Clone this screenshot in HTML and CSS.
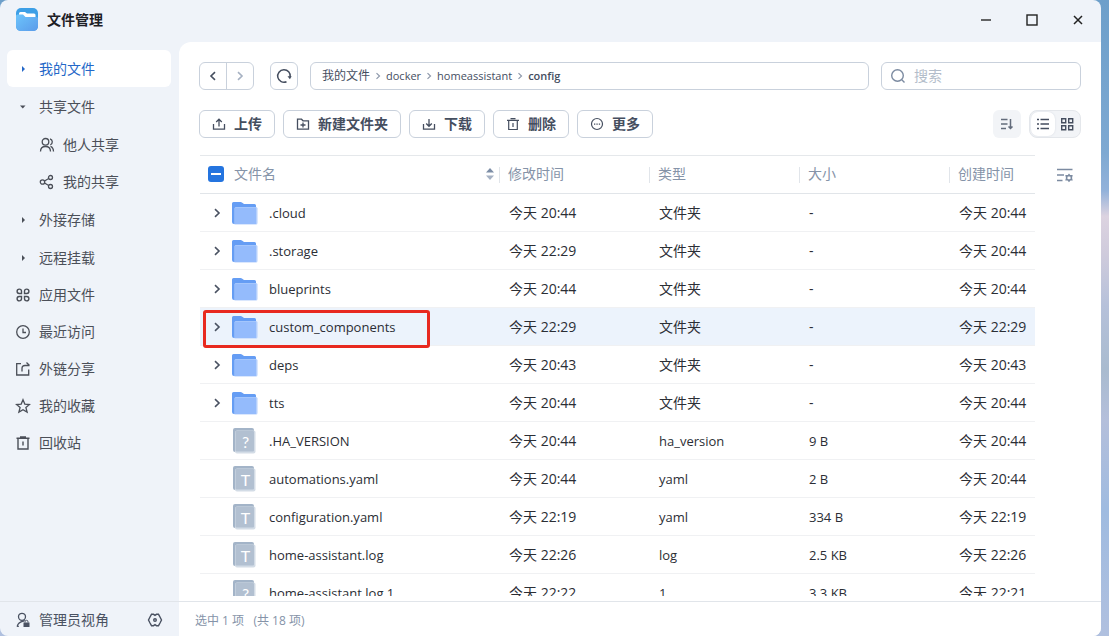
FILE: index.html
```html
<!DOCTYPE html>
<html lang="zh-CN">
<head>
<meta charset="utf-8">
<title>文件管理</title>
<link rel="stylesheet" href="styles.css">
</head>
<body>
<svg class="sprite" aria-hidden="true">
  <defs>
    <linearGradient id="g-logo" x1="0" y1="0" x2="1" y2="1"><stop offset="0" stop-color="#6cc4fb"/><stop offset="1" stop-color="#5b9bea"/></linearGradient>
  </defs>
  <symbol id="folder" viewBox="0 0 26 24">
    <path d="M0 2.500Q0 1 1.500 1H8.500q1 0 1.800.8L12 3H22.500q1.500 0 1.500 1.500V23H2q-2 0-2-2z" fill="#659df4"/>
    <path d="M2.500 7.500Q2.500 6 4 6H24q1.500 0 1.500 1.500V22q0 1.500-1.500 1.500H2.500z" fill="#b5d0fc"/>
    <path d="M3 7.500Q3 6.500 4 6.500H24V23H3z" fill="#94bbfc"/>
  </symbol>
  <symbol id="file" viewBox="0 0 24 26">
    <rect x="0" y="0" width="21" height="24" rx="2" fill="#a3b4c8"/>
    <rect x="2" y="2.500" width="20.500" height="23" rx="2" fill="#d3dce6"/>
    <rect x="2.500" y="3" width="18.500" height="20.500" rx="1" fill="#b2c0d1"/>
  </symbol>
  <symbol id="right" viewBox="0 0 16 16"><path d="M6 4.200l4 3.800-4 3.800" fill="none" stroke="currentColor" stroke-width="1.600"/></symbol>
  <symbol id="left" viewBox="0 0 16 16"><path d="M10 4.200L6 8l4 3.800" fill="none" stroke="currentColor" stroke-width="1.600"/></symbol>
</svg>
<div class="window">
  <header class="titlebar">
    <svg class="logo" viewBox="0 0 22 23"><rect width="22" height="23" rx="5" fill="#3d9fe6"/><path d="M3 5.500Q3 4 4.500 4H9l2 1.500h7q1.500 0 1.500 1.500v4H3z" fill="#fff"/><path d="M0 8q0-1.500 1.500-1.500H7L9.500 9H20.500Q22 9 22 10.500V18q0 5-5 5H5q-5 0-5-5z" fill="url(#g-logo)"/></svg>
    <h1 class="title">文件管理</h1>
    <button class="winbtn" aria-label="最小化"><svg width="12" height="12"><path d="M1 6h10" stroke="#333" stroke-width="1.500"/></svg></button>
    <button class="winbtn" aria-label="最大化"><svg width="12" height="12"><rect x="1" y="1" width="10" height="10" fill="none" stroke="#222" stroke-width="1.400"/></svg></button>
    <button class="winbtn" aria-label="关闭"><svg width="12" height="12"><path d="M2 2l8 8M10 2l-8 8" stroke="#222" stroke-width="1.500"/></svg></button>
  </header>
  <div class="body">
    <aside class="sidebar">
      <nav class="nav">
        <ul class="tree">
          <li><a class="item active" href="#"><svg class="ic" viewBox="0 0 16 16"><path d="M7 5L10 8 7 11z" fill="currentColor"/></svg>我的文件</a></li>
          <li><a class="item" href="#"><svg class="ic" viewBox="0 0 16 16"><path d="M5 6.500h5.500L7.800 9.500z" fill="currentColor"/></svg>共享文件</a></li>
          <li>
            <ul>
              <li><a class="item sub" href="#"><svg class="ic" viewBox="0 0 16 16"><g fill="none" stroke="currentColor" stroke-width="1.300"><circle cx="6.500" cy="4.800" r="3.300"/><path d="M1.500 14.500c0-3.200 2-5 5-5s5 1.800 5 5M11 1.800c3 1 3 5 .3 6.200M11.500 9.300c2 .8 3 2.500 3 5.200"/></g></svg>他人共享</a></li>
              <li><a class="item sub" href="#"><svg class="ic" viewBox="0 0 16 16"><g fill="none" stroke="currentColor" stroke-width="1.300"><circle cx="3.500" cy="8" r="2.200"/><circle cx="11.500" cy="3.500" r="2"/><circle cx="11.500" cy="12.500" r="2"/><path d="M5.500 7l4.200-2.500M5.500 9l4.200 2.500"/></g></svg>我的共享</a></li>
            </ul>
          </li>
          <li><a class="item" href="#"><svg class="ic" viewBox="0 0 16 16"><path d="M7 5L10 8 7 11z" fill="currentColor"/></svg>外接存储</a></li>
          <li><a class="item" href="#"><svg class="ic" viewBox="0 0 16 16"><path d="M7 5L10 8 7 11z" fill="currentColor"/></svg>远程挂载</a></li>
        </ul>
        <ul>
          <li><a class="item" href="#"><svg class="ic" viewBox="0 0 16 16"><g fill="none" stroke="currentColor" stroke-width="1.400"><path d="M6.500 6.500H4.200a2.200 2.200 0 1 1 2.300-2.300zM9.500 6.500V4.200a2.200 2.200 0 1 1 2.300 2.300zM6.500 9.500v2.300a2.200 2.200 0 1 1-2.300-2.300zM9.500 9.500h2.300a2.200 2.200 0 1 1-2.300 2.300z"/></g></svg>应用文件</a></li>
          <li><a class="item" href="#"><svg class="ic" viewBox="0 0 16 16"><g fill="none" stroke="currentColor" stroke-width="1.300"><circle cx="8" cy="8" r="6.300"/><path d="M8 4.500V8.500h3"/></g></svg>最近访问</a></li>
          <li><a class="item" href="#"><svg class="ic" viewBox="0 0 16 16"><g fill="none" stroke="currentColor" stroke-width="1.300"><path d="M6 2.700H1.700V14h12V8.500M7 10.500V7.500q0-3 3-3h4.500M11.500 1.500l3 3"/></g></svg>外链分享</a></li>
          <li><a class="item" href="#"><svg class="ic" viewBox="0 0 16 16"><path d="M8 1.800l1.800 4.300 4.700.4-3.600 3 1.200 4.600L8 11.700l-4.100 2.400 1.200-4.600-3.600-3 4.700-.4z" fill="none" stroke="currentColor" stroke-width="1.300"/></svg>我的收藏</a></li>
          <li><a class="item" href="#"><svg class="ic" viewBox="0 0 16 16"><g fill="none" stroke="currentColor" stroke-width="1.400"><path d="M1.500 3.300h13M5 2h6M3 3.500V14h10V3.500M8 6.500v4"/></g></svg>回收站</a></li>
        </ul>
      </nav>
      <footer class="foot side-foot">
        <a class="admin" href="#"><svg class="ic" viewBox="0 0 16 16"><g fill="none" stroke="currentColor" stroke-width="1.300"><circle cx="7" cy="4.800" r="3.500"/><path d="M1.800 14.300h2M2.200 14.300Q3 10.500 8.500 9.200L9.500 8"/></g><path d="M8.500 10.500h6v4.500h-6z" fill="currentColor"/><path d="M10 10.500V9.800a1.500 1.500 0 0 1 3 0v.7" fill="none" stroke="currentColor"/></svg>管理员视角</a>
        <button class="plain" aria-label="设置"><svg class="ic" viewBox="0 0 16 16"><g fill="none" stroke="currentColor" stroke-width="1.400"><path d="M4.500 2.300h2L8 3.300l1.500-1h2L13 5l1.500 3L13 11l-1.500 2.700h-2L8 12.700l-1.500 1h-2L3 11 1.500 8 3 5z"/><circle cx="8" cy="8" r="1.300"/></g></svg></button>
      </footer>
    </aside>
    <main class="main">
      <div class="content">
        <div class="bar">
          <div class="history">
            <button aria-label="后退"><svg class="ic" viewBox="0 0 16 16"><use href="#left"/></svg></button>
            <button class="dim" aria-label="前进"><svg class="ic" viewBox="0 0 16 16"><use href="#right"/></svg></button>
          </div>
          <button class="square" aria-label="刷新"><svg class="ic" viewBox="0 0 16 16"><path d="M10.500 13.800A6.300 6.300 0 1 1 14.200 9" fill="none" stroke="currentColor" stroke-width="1.500"/><path d="M11.500 8.300h4.200l-1.800 3z" fill="currentColor"/></svg></button>
          <nav class="crumbs" aria-label="路径">
            <a class="root" href="#">我的文件</a><svg class="sep" viewBox="0 0 16 16"><use href="#right"/></svg>
            <a href="#">docker</a><svg class="sep" viewBox="0 0 16 16"><use href="#right"/></svg>
            <a href="#">homeassistant</a><svg class="sep" viewBox="0 0 16 16"><use href="#right"/></svg>
            <a class="here" href="#">config</a>
          </nav>
          <label class="search"><svg class="ic" viewBox="0 0 16 16"><g fill="none" stroke="currentColor" stroke-width="1.400"><circle cx="7.500" cy="7.500" r="5.800"/><path d="M11.800 11.800l2.700 2.700"/></g></svg><input type="text" placeholder="搜索" aria-label="搜索"></label>
        </div>
        <div class="bar actions">
          <button class="act"><svg viewBox="0 0 14 14"><path d="M1.500 7v5.200h11V7M7 9.500V2.500M4.200 5L7 2.200 9.800 5" fill="none" stroke="currentColor" stroke-width="1.300"/></svg>上传</button>
          <button class="act"><svg viewBox="0 0 14 14"><path d="M1.500 2.200h4l1.500 1.600h5.500v8.400h-11zM7 5.500v5M4.500 8h5" fill="none" stroke="currentColor" stroke-width="1.300"/></svg>新建文件夹</button>
          <button class="act"><svg viewBox="0 0 14 14"><path d="M1.500 7v5.200h11V7M7 2v7M4.200 6.500L7 9.300l2.800-2.800" fill="none" stroke="currentColor" stroke-width="1.300"/></svg>下载</button>
          <button class="act"><svg viewBox="0 0 14 14"><path d="M1 3.300h12M4.500 1.700h5M2.700 3.500v9h8.600v-9M7 6v4" fill="none" stroke="currentColor" stroke-width="1.200"/></svg>删除</button>
          <button class="act"><svg viewBox="0 0 14 14"><circle cx="7" cy="7" r="5.500" fill="none" stroke="currentColor" stroke-width="1.200"/><path d="M4 6.500h1.300v1.300H4zM6.400 6.500h1.300v1.300H6.400zM8.800 6.500h1.300v1.300H8.800z" fill="currentColor"/></svg>更多</button>
          <div class="views">
            <button class="sort" aria-label="排序"><svg class="ic" viewBox="0 0 16 16"><path d="M2 3.500h6.500M2 8h6.500M2 12.500h5M11.500 3v9.500M9.500 10.500l2 2 2-2" fill="none" stroke="currentColor" stroke-width="1.500"/></svg></button>
            <div class="toggle">
              <button class="on" aria-label="列表"><svg class="ic" viewBox="0 0 16 16"><path d="M2 3.500h2M5.500 3.500H14M2 8h2M5.500 8H14M2 12.500h2M5.500 12.500H14" stroke="currentColor" stroke-width="1.500"/></svg></button>
              <button aria-label="网格"><svg class="ic" viewBox="0 0 16 16"><path d="M2.700 2.700h4v4h-4zM9.700 2.700h4v4h-4zM2.700 9.700h4v4h-4zM9.700 9.700h4v4h-4z" fill="none" stroke="currentColor" stroke-width="1.400"/></svg></button>
            </div>
          </div>
        </div>
        <div class="list">
          <table class="files">
            <colgroup><col><col class="c-mid"><col class="c-mid"><col class="c-mid"><col class="c-end"></colgroup>
            <thead>
              <tr>
                <th><div class="head"><input class="check" type="checkbox" aria-label="全选"><span class="grow">文件名</span><svg class="arrows" viewBox="0 0 10 16"><path d="M1 6.500L5 2l4 4.500z" fill="#7c8da6"/><path d="M1 9.500h8L5 14z" fill="#a5b1c3"/></svg></div></th>
                <th>修改时间</th><th>类型</th><th>大小</th><th>创建时间</th>
              </tr>
            </thead>
            <tbody>
              <tr><td><div class="name"><button class="plain" aria-label="展开"><svg class="ic" viewBox="0 0 16 16"><use href="#right"/></svg></button><svg class="fo"><use href="#folder"/></svg>.cloud</div></td><td>今天 20:44</td><td>文件夹</td><td>-</td><td>今天 20:44</td></tr>
              <tr><td><div class="name"><button class="plain" aria-label="展开"><svg class="ic" viewBox="0 0 16 16"><use href="#right"/></svg></button><svg class="fo"><use href="#folder"/></svg>.storage</div></td><td>今天 22:29</td><td>文件夹</td><td>-</td><td>今天 20:44</td></tr>
              <tr><td><div class="name"><button class="plain" aria-label="展开"><svg class="ic" viewBox="0 0 16 16"><use href="#right"/></svg></button><svg class="fo"><use href="#folder"/></svg>blueprints</div></td><td>今天 20:44</td><td>文件夹</td><td>-</td><td>今天 20:44</td></tr>
              <tr class="selected"><td><div class="name"><button class="plain" aria-label="展开"><svg class="ic" viewBox="0 0 16 16"><use href="#right"/></svg></button><svg class="fo"><use href="#folder"/></svg>custom_components<span class="mark"></span></div></td><td>今天 22:29</td><td>文件夹</td><td>-</td><td>今天 22:29</td></tr>
              <tr><td><div class="name"><button class="plain" aria-label="展开"><svg class="ic" viewBox="0 0 16 16"><use href="#right"/></svg></button><svg class="fo"><use href="#folder"/></svg>deps</div></td><td>今天 20:43</td><td>文件夹</td><td>-</td><td>今天 20:43</td></tr>
              <tr><td><div class="name"><button class="plain" aria-label="展开"><svg class="ic" viewBox="0 0 16 16"><use href="#right"/></svg></button><svg class="fo"><use href="#folder"/></svg>tts</div></td><td>今天 20:44</td><td>文件夹</td><td>-</td><td>今天 20:44</td></tr>
              <tr><td><div class="name"><span class="fi"><svg><use href="#file"/></svg><b>?</b></span>.HA_VERSION</div></td><td>今天 20:44</td><td class="lat">ha_version</td><td class="lat">9 B</td><td>今天 20:44</td></tr>
              <tr><td><div class="name"><span class="fi"><svg><use href="#file"/></svg><b>T</b></span>automations.yaml</div></td><td>今天 20:44</td><td class="lat">yaml</td><td class="lat">2 B</td><td>今天 20:44</td></tr>
              <tr><td><div class="name"><span class="fi"><svg><use href="#file"/></svg><b>T</b></span>configuration.yaml</div></td><td>今天 22:19</td><td class="lat">yaml</td><td class="lat">334 B</td><td>今天 22:19</td></tr>
              <tr><td><div class="name"><span class="fi"><svg><use href="#file"/></svg><b>T</b></span>home-assistant.log</div></td><td>今天 22:26</td><td class="lat">log</td><td class="lat">2.5 KB</td><td>今天 22:26</td></tr>
              <tr><td><div class="name"><span class="fi"><svg><use href="#file"/></svg><b>?</b></span>home-assistant.log.1</div></td><td>今天 22:22</td><td class="lat">1</td><td class="lat">3.3 KB</td><td>今天 22:21</td></tr>
            </tbody>
          </table>
          <div class="tools"><button class="plain" aria-label="列设置"><svg class="ic" viewBox="0 0 16 16"><g fill="none" stroke="currentColor" stroke-width="1.400"><path d="M0 2.500h15.500M0 8h7M0 13.500h5.500"/><path d="M12 7.700l1 1.200h1.700L14.200 11l.5 1.700H13L12 14l-1-1.300H9.300L9.800 11l-.5-2.100H11z" stroke-width="1.600"/></g></svg></button></div>
        </div>
      </div>
      <footer class="foot main-foot">选中 1 项&nbsp;&nbsp; (共 18 项)</footer>
    </main>
  </div>
</div>
<script src="main.js"></script>
</body>
</html>
```
FILE: styles.css
```css
* { box-sizing: border-box; }
html, body { height: 100%; }
body {
  margin: 0;
  padding-right: 8px;
  overflow: hidden;
  font: 14px/20px "Open Sans", "Noto Sans CJK SC", sans-serif;
  color: #2b2e35;
  background: linear-gradient(#6d9fca 0, #7ea9d2 24%, #93b2da 30%, #dcd3e0 34%, #cfcbdc 40%, #b6c1da 48%, #a9bbcf 58%, #b4bfdb 66%, #9fbbe0 80%, #b0c0df 100%);
}
ul { list-style: none; margin: 0; padding: 0; }
a { color: inherit; text-decoration: none; }
button { font: inherit; color: inherit; padding: 0; border: 0; background: none; display: flex; align-items: center; justify-content: center; }
.sprite { position: absolute; width: 0; height: 0; }
.ic { width: 16px; height: 16px; flex: none; display: block; }

.window { height: 100%; display: flex; flex-direction: column; background: #eff3f9; border-radius: 8px; overflow: hidden; }
.titlebar { height: 42px; flex: none; display: flex; align-items: flex-start; padding-left: 16px; }
.logo { width: 22px; height: 23px; margin-top: 8px; }
.title { flex: 1; margin: 10px 0 0 9px; font-size: 14px; line-height: 20px; font-weight: 600; color: #1d2026; }
.winbtn { width: 46px; height: 40px; }

.body { flex: 1; min-height: 0; display: flex; }
.sidebar { width: 179px; flex: none; display: flex; flex-direction: column; color: #4b4f58; }
.nav { flex: 1; padding: 8px 8px 0 7px; }
.tree { display: grid; gap: 1px; }
.item { display: flex; align-items: center; gap: 8px; height: 37px; padding-left: 8px; border-radius: 6px; }
.item.active { background: #fff; color: #2468c8; }
.sub { padding-left: 32px; }
.foot { height: 35px; flex: none; display: flex; align-items: center; border-top: 1px solid #e1e5ea; }
.side-foot { justify-content: space-between; padding: 2px 16px 0 15px; color: #4a5262; }
.admin { display: flex; align-items: center; gap: 8px; }

.main { flex: 1; min-width: 0; display: flex; flex-direction: column; background: #fff; border-top-left-radius: 12px; }
.content { flex: 1; min-height: 0; display: flex; flex-direction: column; padding: 20px 20px 5px 20px; }
.bar { display: flex; align-items: center; height: 28px; flex: none; color: #454e5f; }
.history, .square, .crumbs, .search, .act { height: 28px; border: 1px solid #c9d1dc; border-radius: 6px; background: #fff; }
.history { display: flex; width: 55px; }
.history button { flex: 1; }
.history button + button { border-left: 1px solid #c9d1dc; }
.history .dim { color: #a6b1c2; }
.square { width: 28px; margin: 0 12px 0 16px; }
.crumbs { flex: 1; display: flex; align-items: center; padding: 0 11px; font-size: 11px; }
.root { font-size: 12px; }
.here { font-weight: 600; }
.sep { width: 12px; height: 12px; margin: 0 2px; color: #8e99ab; }
.search { width: 200px; margin-left: 12px; display: flex; align-items: center; gap: 8px; padding: 0 8px; color: #7c8ba1; }
.search input { flex: 1; min-width: 0; border: 0; outline: 0; padding: 0; background: none; font: inherit; color: #2b2e35; }
.search input::placeholder { color: #b3bdca; opacity: 1; }

.actions { margin-top: 20px; gap: 8px; }
.act { gap: 8px; padding: 0 12px; font-weight: 600; white-space: nowrap; }
.act svg { width: 14px; height: 14px; }
.views { margin-left: auto; display: flex; gap: 8px; }
.sort { width: 28px; height: 28px; border-radius: 6px; background: #f2f4f7; color: #636c7b; }
.toggle { display: flex; width: 52px; height: 28px; padding: 1px; border: 1px solid #e4e7eb; border-radius: 8px; background: #f2f4f7; }
.toggle button { flex: 1; border-radius: 7px; }
.toggle .on { background: #fff; box-shadow: 0 0 2px #d5d9e0; }

.list { flex: 1; min-height: 0; margin-top: 17px; display: flex; align-items: flex-start; overflow: hidden; padding-left: 1px; }
.files { flex: 1; width: 100%; table-layout: fixed; border-collapse: separate; border-spacing: 0; }
.c-mid { width: 150px; }
.c-end { width: 85px; }
th, td { height: 38px; padding: 0 0 0 9px; text-align: left; white-space: nowrap; border-bottom: 1px solid #f0f1f3; }
th { height: 39px; padding: 0 0 2px 8px; font-weight: 400; color: #8593a8; border-top: 1px solid #e5e8eb; border-bottom-color: #e1e5e9; background: linear-gradient(#e1e5ea, #e1e5ea) right center / 1px 16px no-repeat; }
th:last-child { background: none; }
.head { display: flex; align-items: center; gap: 10px; padding-right: 5px; }
.grow { flex: 1; }
.arrows { width: 10px; height: 16px; }
.check { appearance: none; width: 16px; height: 16px; margin: 0; border-radius: 3px; background: linear-gradient(#fff, #fff) center / 10px 2px no-repeat #2474df; }
.name { position: relative; display: flex; align-items: center; height: 37px; font-size: 13px; }
.lat { font-size: 13px; }
.fo { width: 26px; height: 24px; margin: 0 11px 0 7px; }
.fi { position: relative; width: 24px; height: 26px; margin: 0 12px 0 24px; }
.fi svg { display: block; width: 24px; height: 26px; }
.fi b { position: absolute; inset: 4px 0 0 1px; text-align: center; font-family: Lato, sans-serif; font-weight: 400; font-size: 16px; color: #fff; }
.selected td { background: #ecf3fc; }
.mark { position: absolute; left: -6px; top: 2px; width: 227px; height: 38px; border: 3px solid #e8291f; border-radius: 3px; z-index: 1; }
.plain { color: #4a5262; }
.tools { width: 46px; flex: none; display: flex; justify-content: flex-end; padding: 12px 8px 0 0; }
.tools .plain { color: #7c8ba1; }
.main-foot { padding: 4px 16px 0; font-size: 12px; color: #8593a8; }
```
FILE: main.js
```js
document.querySelector('.check').indeterminate = true;
```
